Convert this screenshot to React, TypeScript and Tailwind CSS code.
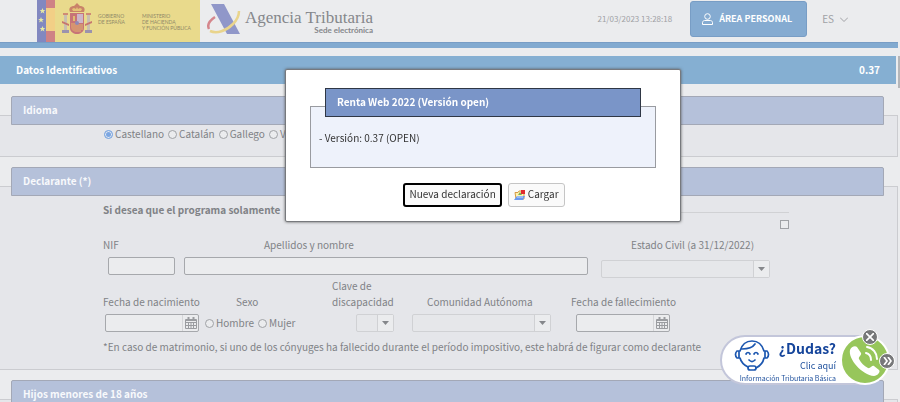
import React from 'react';

/** Spanish flag strip, coat of arms and ministry names. */
function GovernmentBanner() {
  return (
    <div className="flex h-[42px] w-[163px] shrink-0 bg-[#e9da8c] font-['Lato',sans-serif] text-[5px] leading-[6px] text-[#8f8968]">
      <svg className="h-[42px] w-[61px] shrink-0" viewBox="0 0 61 42" aria-hidden="true">
        <rect width="9" height="42" fill="#8288c0" />
        <rect x="9" width="9" height="8" fill="#cf8285" />
        <rect x="9" y="8" width="9" height="23" fill="#f2cf86" />
        <rect x="9" y="31" width="9" height="11" fill="#cf8285" />
        <g fill="#e6e8a4">
          <path d="M5.500 8l.8 2h2.100l-1.700 1.300.7 2.200-1.900-1.300-1.900 1.300.7-2.200-1.700-1.300h2.100z" />
          <path d="M4 17l.8 2h2.100l-1.700 1.300.7 2.200L4 21.200l-1.900 1.300.7-2.200L1.100 19h2.100z" />
          <path d="M5.500 26l.8 2h2.100l-1.700 1.300.7 2.200-1.900-1.300-1.900 1.300.7-2.200-1.700-1.300h2.100z" />
        </g>
        {/* pillars */}
        <g>
          <path d="M26 13h5v2h-5zM49 13h5v2h-5z" fill="#cf8b75" />
          <path d="M27 15h3v15h-3zM50 15h3v15h-3z" fill="#c9bfae" />
          <path d="M25 30h7v3h-7zM48 30h7v3h-7z" fill="#9b93ad" />
          <path d="M25 21l7 3v2l-7-3zM55 21l-7 3v2l7-3z" fill="#c7766f" />
        </g>
        {/* crown and shield */}
        <path d="M33 12c-2-4 1-6 4-6l3-3 3 3c3 0 6 2 4 6z" fill="#c98369" />
        <path d="M35 9l2-1 2 1 1-2 1 2 2-1 2 1-1 2h-8z" fill="#e4c276" />
        <path d="M33 13h14v15c0 4-4 6-7 6s-7-2-7-6z" fill="#c77477" />
        <path d="M40 14h6v9h-6z" fill="#cdb6c8" />
        <path d="M34 23h6v9c-3 0-6-2-6-5z" fill="#d69470" />
        <path d="M36 16h2v5h-2z" fill="#e0bd72" />
        <path d="M41 24v8M43 24v8M45 24v6" stroke="#dfb670" strokeWidth="1" />
        <circle cx="40" cy="23" r="2" fill="#8f88b5" />
      </svg>
      <p className="w-[44px] pt-[13px]">GOBIERNO<br />DE ESPAÑA</p>
      <p className="whitespace-nowrap pt-[13px]">MINISTERIO<br />DE HACIENDA<br />Y FUNCIÓN PÚBLICA</p>
    </div>
  );
}

function AgencyLogo() {
  return (
    <a href="#inicio" className="ml-[7px] flex shrink-0">
      <svg className="mt-1 h-[31px] w-[34px]" viewBox="0 0 34 31" fill="none" aria-hidden="true">
        <path d="M8 13C2 17 0 21 2 25" stroke="#d5868c" strokeWidth="2.500" />
        <path d="M4 0h13l16 30H20z" fill="#9097c9" />
        <path d="M3 27c7 3 16 0 23-7 4-4 6-8 6-13" stroke="#e9d48c" strokeWidth="2.500" />
      </svg>
      <span className="ml-1 flex flex-col items-end pt-[9px]">
        <span className="font-['Liberation_Serif',serif] text-[17px] leading-[17px] text-[#85878b]">Agencia Tributaria</span>
        <span className="font-['Lato',sans-serif] text-[8px] font-bold leading-[8px] text-[#85878b]">Sede electrónica</span>
      </span>
    </a>
  );
}

function CalendarIcon() {
  return (
    <svg className="h-3 w-3" viewBox="0 0 12 12" fill="none" stroke="#9a9ca0" aria-hidden="true">
      <path d="M.5 2.500h11v9H.5zM.5 5.500h11M.5 8.500h11M3.500 5v6M6 5v6M8.500 5v6" />
      <path d="M.5 3.500h11" />
      <path d="M3.500 0v3M8.500 0v3" strokeWidth="2" />
    </svg>
  );
}

interface SectionProps {
  title: string;
  className: string;
  children?: React.ReactNode;
}

function Section({ title, className, children }: SectionProps) {
  return (
    <section className={`border-y border-r border-[#cbccd0] bg-[#e5e6ea] ${className}`}>
      <h2 className="-mt-5 ml-[11px] mr-[13px] h-[29px] rounded-t-xs border border-[#a3a8b6] bg-[#b5c1da] px-[11px] text-[10px] font-bold leading-[26px] text-[#f8f9fc]">
        {title}
      </h2>
      {children}
    </section>
  );
}

interface RadioProps {
  name: string;
  label: string;
  defaultChecked?: boolean;
}

function Radio({ name, label, defaultChecked }: RadioProps) {
  return (
    <label className="flex items-center gap-[2px]">
      <input
        type="radio"
        name={name}
        defaultChecked={defaultChecked}
        className="h-[9px] w-[9px] appearance-none rounded-full border border-[#a0a2a6] bg-[#ebecee] checked:border-[#7fa9e0] checked:bg-[#7ba6e2] checked:shadow-[inset_0_0_0_1px_#e5e9f0]"
      />
      {label}
    </label>
  );
}

function DateField({ id }: { id: string }) {
  return (
    <div className="flex h-[18px] w-[94px] overflow-hidden rounded-xs border border-[#a6a8ac] bg-[#ebecee]">
      <input id={id} type="text" className="min-w-0 flex-1" />
      <button type="button" aria-label="Abrir calendario" className="flex w-4 items-center justify-center border-l border-[#d5d6d9]">
        <CalendarIcon />
      </button>
    </div>
  );
}

function SelectField({ id, className }: { id: string; className: string }) {
  return (
    <div className={`flex h-[18px] rounded-xs border border-[#d0d1d4] bg-[#e6e7ea] ${className}`}>
      <select id={id} className="min-w-0 flex-1 appearance-none" />
      <span className="flex w-4 items-center justify-center border-l border-[#d0d1d4] bg-[#ebecee]">
        <svg className="h-1 w-[7px]" viewBox="0 0 7 4" aria-hidden="true">
          <path d="M0 0h7L3.500 4z" fill="#85878b" />
        </svg>
      </span>
    </div>
  );
}

function VersionDialog() {
  return (
    <div className="fixed inset-0 flex items-start justify-center pl-[66px] pt-[69px]">
      <div role="dialog" aria-labelledby="dialog-title" className="h-[153px] w-[396px] rounded-xs border border-[#77797d] bg-white px-6 pt-[36px] text-[10px] text-[#333] shadow-[0_0_3px_#555]">
        <div className="h-[62px] border border-[#999ba0] bg-[#eef2fb]">
          <h2 id="dialog-title" className="-mt-[19px] mx-[14px] h-[29px] border border-[#2f3745] bg-[#7a95c8] px-[11px] font-bold leading-[26px] text-white">
            Renta Web 2022 (Versión open)
          </h2>
          <p className="px-2 pt-[13px] leading-4">- Versión: 0.37 (OPEN)</p>
        </div>
        <div className="mt-[15px] flex justify-center gap-[6px] pl-[2px]">
          <button type="button" className="flex h-6 items-center rounded-[3px] border-2 border-black bg-[#fafafa] px-1 pb-[2px]">
            Nueva declaración
          </button>
          <button type="button" className="flex h-6 items-center gap-[2px] rounded-[3px] border border-[#c5c5c5] bg-[#fafafa] px-[5px] pb-[2px]">
            <svg className="mt-[2px] h-3 w-3" viewBox="0 0 12 12" aria-hidden="true">
              <path d="M1 3.500h3l1-1.500h3l2 3v5H2z" fill="#fff3b0" stroke="#d59a45" />
              <path d="M7 1h4v4H7z" fill="#e02c30" />
              <path d="M4 6l2-3 2 3z" fill="#7dac5c" />
              <path d="M0 11l3-4h8l-2 4z" fill="#6a9af0" />
              <path d="M3 8h6" stroke="#c7dcff" />
            </svg>
            Cargar
          </button>
        </div>
      </div>
    </div>
  );
}

function HelpWidget() {
  return (
    <div className="fixed bottom-[17px] right-[14px] flex h-[50px] w-[166px] rounded-full border-2 border-[#c3c6da] bg-white pl-3 text-[#1d4f9c]">
      <div className="flex w-[102px] flex-col">
        <div className="flex justify-between">
          <svg className="mt-[3px] h-[31px] w-[36px]" viewBox="0 0 36 31" fill="none" stroke="#1c57b0" strokeWidth="1.700" strokeLinecap="round" aria-hidden="true">
            <path d="M6 11C8 4 12 1 18 1s10 3 12 10M30 18c-1 5-4 8-8 10M6 18c1 4 4 7 8 9M8 9c6 0 11-2 13-5" />
            <path d="M5 11H3c-2 2-2 5 0 7h2zM31 11h2c2 2 2 5 0 7h-2z" />
            <path d="M12 14c1-2 3-2 4 0M20 14c1-2 3-2 4 0M15 20c2 2 4 2 6 0" />
            <rect x="14" y="26" width="8" height="4" rx="2" />
          </svg>
          <a href="#ayuda" className="text-right">
            <strong className="block text-[14px] leading-[22px] text-[#15459b]">¿Dudas?</strong>
            <span className="block text-[9px] leading-[14px]">Clic aquí</span>
          </a>
        </div>
        <p className="whitespace-nowrap text-right text-[7px] leading-[10px]">Información Tributaria Básica</p>
      </div>
      <button type="button" aria-label="Llamar" className="absolute -right-[6px] -top-[2px] h-[50px] w-[50px] rounded-full border-2 border-white bg-[#97c65b]">
        <svg className="h-full w-full" viewBox="0 0 46 46" fill="none" aria-hidden="true">
          <path d="M8 13c1-3 5-5 7-3l4 6c1 2-3 4-2 6 2 4 5 7 9 9 2 1 4-3 6-2l5 4c2 2-2 6-5 6C20 38 6 22 8 13z" fill="#fff" />
          <path d="M24 16c4 1 5 4 5 7M25 10c6 1 10 6 10 12" stroke="#fff" strokeWidth="2" strokeLinecap="round" />
        </svg>
      </button>
      <button type="button" aria-label="Cerrar" className="absolute -top-[8px] right-[6px] flex h-4 w-4 items-center justify-center rounded-full border border-white bg-[#77787a]">
        <svg className="h-2 w-2" viewBox="0 0 8 8" stroke="#fff" strokeWidth="1.700" aria-hidden="true"><path d="M0 0l8 8M8 0L0 8" /></svg>
      </button>
      <button type="button" aria-label="Ocultar" className="absolute -right-[11px] top-[16px] flex h-4 w-4 items-center justify-center rounded-full border border-white bg-[#77787a]">
        <svg className="h-2 w-[9px]" viewBox="0 0 9 8" fill="none" stroke="#fff" strokeWidth="1.700" aria-hidden="true"><path d="M1 0l3 4-3 4M5 0l3 4-3 4" /></svg>
      </button>
    </div>
  );
}

const IDIOMAS = ['Castellano', 'Catalán', 'Gallego', 'Valenciano'];

export default function App() {
  return (
    <div className="flex h-screen flex-col overflow-hidden bg-[#ebecee] font-['Noto_Sans_CJK_SC',sans-serif] text-[10px] leading-4 text-[#808286]">
      <header className="flex h-[42px] shrink-0 pl-[37px] pr-[52px]">
        <GovernmentBanner />
        <AgencyLogo />
        <div className="ml-auto flex h-[38px] items-center">
          <time className="text-[8px] text-[#a0a1a5]">21/03/2023 13:28:18</time>
          <button type="button" className="ml-[18px] flex h-[36px] w-[117px] items-center gap-[6px] rounded-[3px] border border-[#789dc5] bg-[#85abd1] pl-[11px] text-[9px] font-bold text-white">
            <svg className="h-3 w-[11px]" viewBox="0 0 11 12" fill="none" stroke="currentColor" aria-hidden="true">
              <circle cx="5.500" cy="3.500" r="2.800" />
              <path d="M.5 11.500v-2c0-1 1-2 2-2h6c1 0 2 1 2 2v2z" />
            </svg>
            ÁREA PERSONAL
          </button>
          <button type="button" className="ml-[15px] flex items-center gap-[6px] text-[#a0a1a5]">
            ES
            <svg className="h-[5px] w-2" viewBox="0 0 8 5" fill="none" stroke="currentColor" aria-hidden="true"><path d="M0 .5l4 4 4-4" /></svg>
          </button>
        </div>
      </header>
      <div className="mr-[2px] h-[6px] shrink-0 border-t border-[#789dc5] bg-[#82aad0]" />

      <div className="mt-2 flex min-h-0 flex-1">
        <main className="min-w-0 flex-1 overflow-hidden">
          <div className="mr-[2px] flex h-7 items-center justify-between bg-[#85afd2] px-4 font-bold text-white">
            <h1>Datos Identificativos</h1>
            <span>0.37</span>
          </div>

          <Section title="Idioma" className="mt-[31px] h-[42px]">
            <div className="flex gap-1 pl-[104px] pt-px">
              {IDIOMAS.map((idioma) => (
                <Radio key={idioma} name="idioma" label={idioma} defaultChecked={idioma === 'Castellano'} />
              ))}
            </div>
          </Section>

          <Section title="Declarante (*)" className="mt-[29px] h-[184px]">
            <form className="w-[789px] pl-[103px]">
              <div className="flex items-center gap-2 pt-[6px]">
                <label htmlFor="datos-propios" className="font-bold">Si desea que el programa solamente</label>
                <hr className="mt-1 flex-1 border-[#d0d1d4]" />
              </div>
              <div className="flex h-3 items-center justify-end">
                <input id="datos-propios" type="checkbox" className="h-[9px] w-[9px] appearance-none border border-[#a0a2a6] bg-[#ebecee]" />
              </div>

              <div className="flex pt-[7px]">
                <div className="w-[81px]">
                  <label htmlFor="nif" className="block">NIF</label>
                  <input id="nif" type="text" className="ml-[5px] mt-1 block h-[18px] w-[67px] rounded-xs border border-[#a6a8ac] bg-[#ebecee]" />
                </div>
                <div className="w-[417px]">
                  <label htmlFor="nombre" className="block pl-20">Apellidos y nombre</label>
                  <input id="nombre" type="text" className="mt-1 block h-[18px] w-[404px] rounded-xs border border-[#a6a8ac] bg-[#ebecee]" />
                </div>
                <div>
                  <label htmlFor="estado-civil" className="block pl-[30px]">Estado Civil (a 31/12/2022)</label>
                  <SelectField id="estado-civil" className="mt-[7px] w-[169px]" />
                </div>
              </div>

              <div className="flex items-end">
                <div className="w-[102px]">
                  <label htmlFor="nacimiento" className="block whitespace-nowrap">Fecha de nacimiento</label>
                  <div className="ml-[2px] mt-1"><DateField id="nacimiento" /></div>
                </div>
                <fieldset className="w-[127px]">
                  <legend className="pl-[31px]">Sexo</legend>
                  <div className="mt-1 flex h-[18px] items-center gap-1">
                    <Radio name="sexo" label="Hombre" />
                    <Radio name="sexo" label="Mujer" />
                  </div>
                </fieldset>
                <div className="w-[80px]">
                  <label htmlFor="discapacidad" className="block">Clave de<br />discapacidad</label>
                  <SelectField id="discapacidad" className="ml-6 mt-1 w-[38px]" />
                </div>
                <div className="w-[164px]">
                  <label htmlFor="comunidad" className="block pl-[15px]">Comunidad Autónoma</label>
                  <SelectField id="comunidad" className="mt-1 w-[139px]" />
                </div>
                <div>
                  <label htmlFor="fallecimiento" className="-ml-[5px] block whitespace-nowrap">Fecha de fallecimiento</label>
                  <div className="mt-1"><DateField id="fallecimiento" /></div>
                </div>
              </div>
            </form>
            <p className="whitespace-nowrap pl-[103px] pt-[7px]">
              *En caso de matrimonio, si uno de los cónyuges ha fallecido durante el período impositivo, este habrá de figurar como declarante
            </p>
          </Section>

          <Section title="Hijos menores de 18 años" className="mt-[29px] h-[42px]" />
        </main>
        <div className="w-[2px] shrink-0">
          <div className="h-8 bg-[#b5b6b9]" />
        </div>
      </div>

      <VersionDialog />
      <HelpWidget />
    </div>
  );
}
